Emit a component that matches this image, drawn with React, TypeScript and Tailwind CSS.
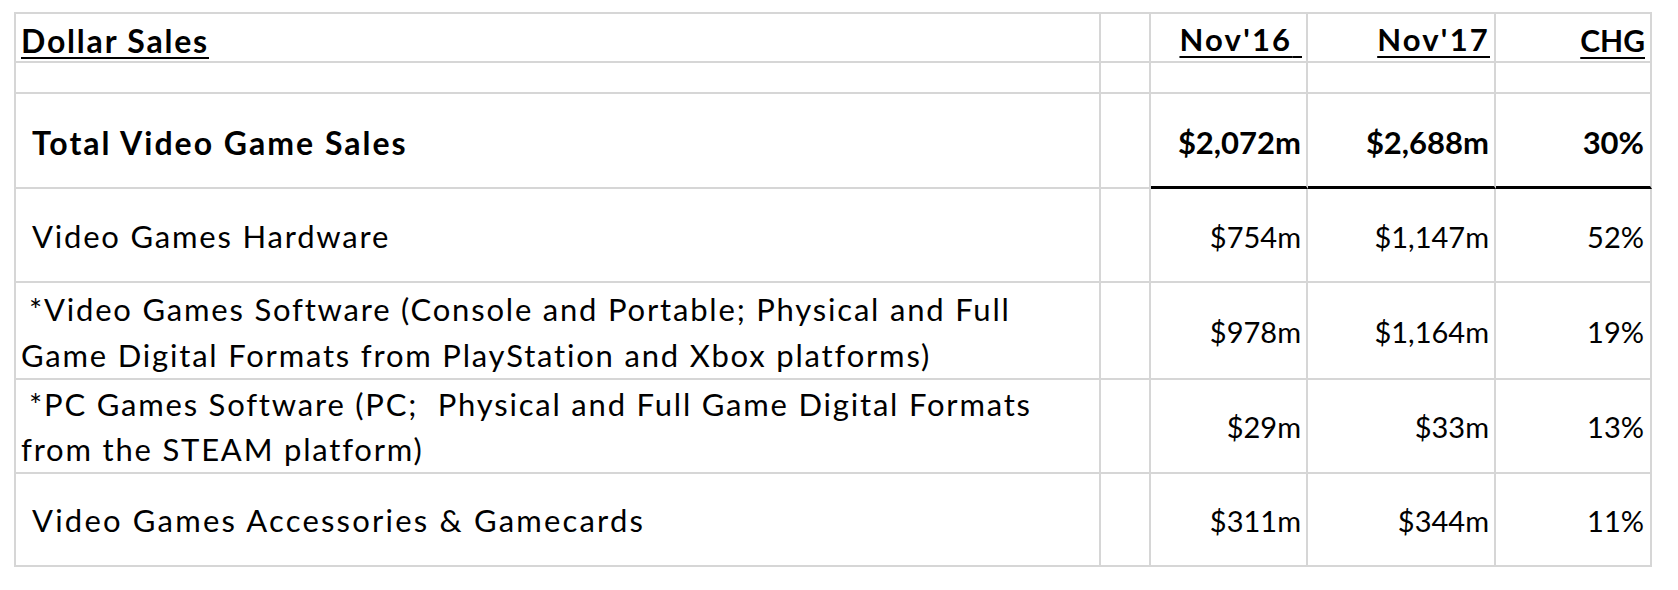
import React from 'react';

const COLS = 'grid grid-cols-[1085px_50px_157px_188px_156px]';
const CELL = 'border-r-2 border-b-2 border-[#d6d6d6]';

interface Row {
  label: React.ReactNode;
  nov16: string;
  nov17: string;
  chg: string;
  h: string;
}

const ROWS: Row[] = [
  {
    label: <span className="ml-[11px]">Video Games Hardware</span>,
    nov16: '$754m',
    nov17: '$1,147m',
    chg: '52%',
    h: 'h-[94px]',
  },
  {
    label: (
      <span className="block leading-[46px]">
        <span className="ml-[8px]">*Video Games Software (Console and Portable; Physical and Full</span>
        <br />
        Game Digital Formats from PlayStation and Xbox platforms)
      </span>
    ),
    nov16: '$978m',
    nov17: '$1,164m',
    chg: '19%',
    h: 'h-[96px]',
  },
  {
    label: (
      <span className="block leading-[45px] whitespace-pre">
        <span className="ml-[8px]">*PC Games Software (PC;  Physical and Full Game Digital Formats</span>
        <br />
        from the STEAM platform)
      </span>
    ),
    nov16: '$29m',
    nov17: '$33m',
    chg: '13%',
    h: 'h-[94px]',
  },
  {
    label: <span className="ml-[11px] tracking-[2.2px]">Video Games Accessories &amp; Gamecards</span>,
    nov16: '$311m',
    nov17: '$344m',
    chg: '11%',
    h: 'h-[94px]',
  },
];

export default function App() {
  return (
    <div className="min-h-screen bg-white pt-[12px] pl-[14px] font-['Lato',sans-serif] text-black">
      <div className="w-[1638px] border-l-2 border-t-2 border-[#d6d6d6]">
        {/* header */}
        <div className={`${COLS} h-[49px]`}>
          <div className={`${CELL} flex items-end pb-[4px] pl-[5px]`}>
            <span className="text-[32px] font-bold leading-none tracking-[1.8px] underline decoration-2 underline-offset-[4px]">
              Dollar Sales
            </span>
          </div>
          <div className={CELL} />
          <div className={`${CELL} flex items-end justify-end pb-[6px] pr-[4px]`}>
            <span className="whitespace-pre text-[31px] font-bold leading-none tracking-[2.2px] underline decoration-2 underline-offset-[5px]">
              Nov'16{' '}
            </span>
          </div>
          <div className={`${CELL} flex items-end justify-end pb-[6px] pr-[4px]`}>
            <span className="text-[31px] font-bold leading-none tracking-[2.2px] underline decoration-2 underline-offset-[5px]">
              Nov'17
            </span>
          </div>
          <div className={`${CELL} flex items-end justify-end pb-[6px] pr-[5px]`}>
            <span className="text-[30px] font-bold leading-none underline decoration-2 underline-offset-[5px]">
              CHG
            </span>
          </div>
        </div>

        {/* spacer row */}
        <div className={`${COLS} h-[31px]`}>
          <div className={CELL} />
          <div className={CELL} />
          <div className={CELL} />
          <div className={CELL} />
          <div className={CELL} />
        </div>

        {/* total */}
        <div className={`${COLS} h-[95px]`}>
          <div className={`${CELL} flex items-center pt-[4px] pl-[5px]`}>
            <span className="ml-[11px] text-[32px] font-bold leading-none tracking-[2px]">Total Video Game Sales</span>
          </div>
          <div className={CELL} />
          <div className="flex items-center justify-end border-r-2 border-b-[3px] border-r-[#d6d6d6] border-b-black pt-[4px] pr-[5px] text-[31px] font-bold leading-none">
            $2,072m
          </div>
          <div className="flex items-center justify-end border-r-2 border-b-[3px] border-r-[#d6d6d6] border-b-black pt-[4px] pr-[5px] text-[31px] font-bold leading-none">
            $2,688m
          </div>
          <div className="flex items-center justify-end border-r-2 border-b-[3px] border-r-[#d6d6d6] border-b-black pt-[4px] pr-[6px] text-[31px] font-bold leading-none">
            30%
          </div>
        </div>

        {ROWS.map((r, i) => (
          <div key={i} className={`${COLS} ${r.h}`}>
            <div className={`${CELL} flex items-center pt-[3px] pl-[5px] text-[31px] leading-none tracking-[1.8px] whitespace-nowrap`}>
              {r.label}
            </div>
            <div className={CELL} />
            <div className={`${CELL} flex items-center justify-end pt-[2px] pr-[5px] text-[29px] leading-none`}>{r.nov16}</div>
            <div className={`${CELL} flex items-center justify-end pt-[2px] pr-[5px] text-[29px] leading-none`}>{r.nov17}</div>
            <div className={`${CELL} flex items-center justify-end pt-[2px] pr-[6px] text-[29px] leading-none`}>{r.chg}</div>
          </div>
        ))}
      </div>
    </div>
  );
}
